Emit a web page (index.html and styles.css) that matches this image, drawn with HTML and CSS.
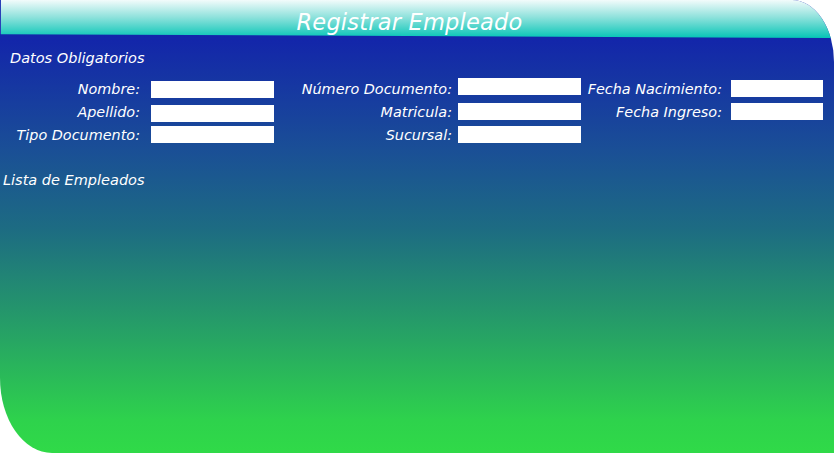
FILE: index.html
```
<!DOCTYPE html>
<html lang="es">
<head>
<meta charset="utf-8">
<title>Registrar Empleado</title>
<link rel="stylesheet" href="styles.css">
</head>
<body>
<div class="panel">
  <div class="header"><h1 class="title">Registrar Empleado</h1></div>
  <div class="section-title">Datos Obligatorios</div>
  <div class="form">
    <label class="lbl c1">Nombre:</label><div class="inp"></div>
    <label class="lbl c2">Número Documento:</label><div class="inp up3"></div>
    <label class="lbl c3">Fecha Nacimiento:</label><div class="inp up1"></div>

    <label class="lbl c1">Apellido:</label><div class="inp down1"></div>
    <label class="lbl c2">Matricula:</label><div class="inp up1"></div>
    <label class="lbl c3">Fecha Ingreso:</label><div class="inp up1"></div>

    <label class="lbl c1">Tipo Documento:</label><div class="inp up1"></div>
    <label class="lbl c2">Sucursal:</label><div class="inp up1"></div>
  </div>
  <div class="list-title">Lista de Empleados</div>
</div>
</body>
</html>
```
FILE: styles.css
```
html, body {
  margin: 0;
  padding: 0;
  background: #ffffff;
}
body {
  width: 834px;
  height: 453px;
  overflow: hidden;
  font-family: "DejaVu Sans", sans-serif;
  font-style: italic;
  color: #ffffff;
}
.panel {
  width: 834px;
  height: 453px;
  box-sizing: border-box;
  border-radius: 0 42px 0 52px / 0 62px 0 75px;
  overflow: hidden;
  background: linear-gradient(to bottom, #1224ae 0px, #1326aa 40px, #1a4f96 150px, #1d6c82 230px, #26a066 330px, #2ed24c 420px, #30da48 453px);
  display: flex;
  flex-direction: column;
}
.header {
  height: 38px;
  flex: none;
  background: linear-gradient(to bottom, #f2fbfb 0%, #8fe2dc 45%, #05c5b6 100%);
  clip-path: polygon(0 0, 100% 0, 100% 100%, 0 90%);
  border-left: 1px solid #2a3fb8;
  display: flex;
  justify-content: center;
}
.title {
  margin: 0;
  padding: 8px 16px 0 0;
  font-family: "DejaVu Sans", sans-serif;
  font-weight: 200;
  font-size: 22.5px;
  line-height: 28px;
  letter-spacing: 0.2px;
  color: #ffffff;
}
.section-title {
  margin: 12px 0 0 10px;
  font-size: 14.5px;
  line-height: 17px;
}
.form {
  display: grid;
  grid-template-columns: 151px 123px 184px 123px 150px 92px;
  grid-auto-rows: 17px;
  row-gap: 6px;
  margin-top: 14px;
}
.lbl {
  font-size: 14.4px;
  line-height: 17px;
  text-align: right;
  white-space: nowrap;
}
.c1 { padding-right: 11px; }
.c2 { padding-right: 6px; }
.c3 { padding-right: 9px; }
.inp {
  height: 17px;
  background: #ffffff;
}
.down1 { margin-top: 1px; }
.up1 { margin-top: -1px; }
.up3 { margin-top: -3px; }
.list-title {
  margin: 28px 0 0 3px;
  font-size: 14.5px;
  line-height: 17px;
}
```
